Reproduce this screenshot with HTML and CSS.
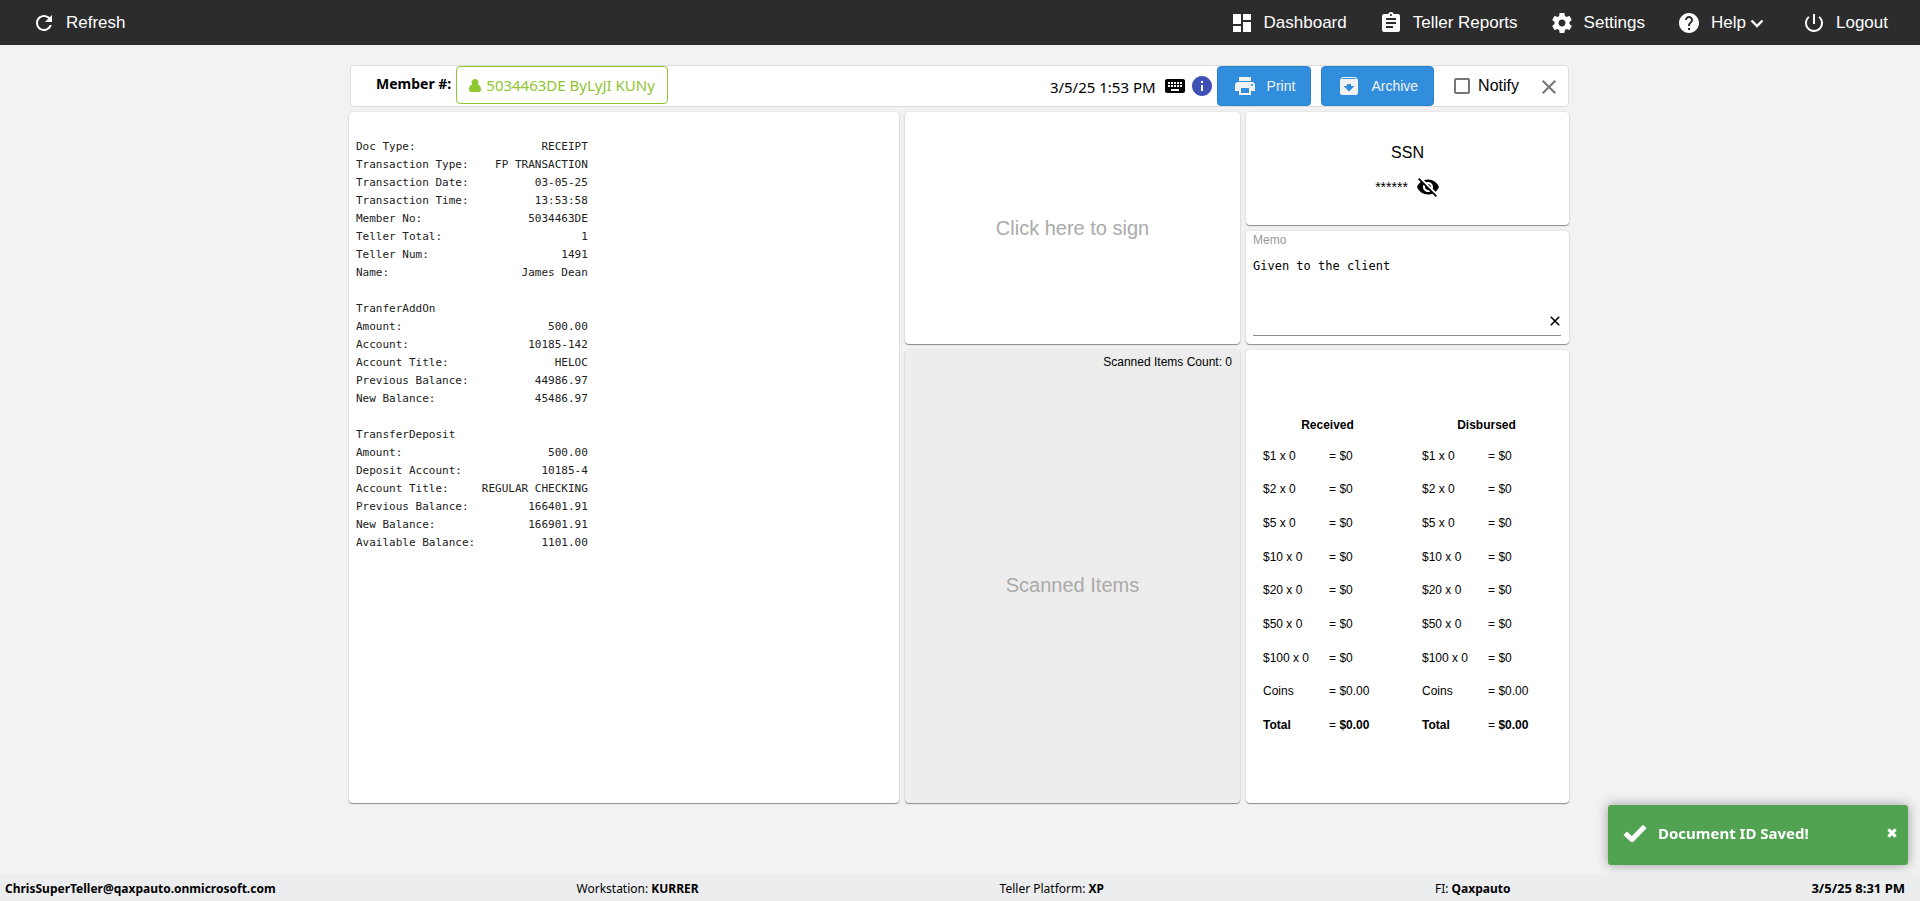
FILE: index.html
```html
<!DOCTYPE html>
<html lang="en">
<head>
<meta charset="utf-8">
<meta name="viewport" content="width=device-width, initial-scale=1">
<title>Teller Receipt</title>
<link rel="stylesheet" href="styles.css">
</head>
<body>
<header class="topbar">
  <a class="nav-item" href="#refresh">
    <svg class="icon" viewBox="0 0 24 24"><path d="M17.65 6.35C16.2 4.9 14.21 4 12 4c-4.42 0-7.99 3.58-7.99 8s3.57 8 7.99 8c3.73 0 6.84-2.55 7.73-6h-2.08c-.82 2.33-3.04 4-5.65 4-3.31 0-6-2.69-6-6s2.69-6 6-6c1.66 0 3.14.69 4.22 1.78L13 11h7V4l-2.35 2.35z"/></svg>
    <span>Refresh</span>
  </a>
  <nav class="nav">
    <a class="nav-item" href="#dashboard">
      <svg class="icon" viewBox="0 0 24 24"><path d="M3 13h8V3H3v10zm0 8h8v-6H3v6zm10 0h8V11h-8v10zm0-18v6h8V3h-8z"/></svg>
      <span>Dashboard</span>
    </a>
    <a class="nav-item" href="#reports">
      <svg class="icon" viewBox="0 0 24 24"><path d="M19 3h-4.18C14.4 1.84 13.3 1 12 1c-1.3 0-2.4.84-2.82 2H5c-1.1 0-2 .9-2 2v14c0 1.1.9 2 2 2h14c1.1 0 2-.9 2-2V5c0-1.1-.9-2-2-2zm-7 0c.55 0 1 .45 1 1s-.45 1-1 1-1-.45-1-1 .45-1 1-1zm2 14H7v-2h7v2zm3-4H7v-2h10v2zm0-4H7V7h10v2z"/></svg>
      <span>Teller Reports</span>
    </a>
    <a class="nav-item" href="#settings">
      <svg class="icon" viewBox="0 0 24 24"><path d="M19.43 12.98c.04-.32.07-.64.07-.98s-.03-.66-.07-.98l2.11-1.65c.19-.15.24-.42.12-.64l-2-3.46c-.12-.22-.39-.3-.61-.22l-2.49 1c-.52-.4-1.08-.73-1.69-.98l-.38-2.65C14.46 2.18 14.25 2 14 2h-4c-.25 0-.46.18-.49.42l-.38 2.65c-.61.25-1.17.59-1.69.98l-2.49-1c-.23-.09-.49 0-.61.22l-2 3.46c-.13.22-.07.49.12.64l2.11 1.65c-.04.32-.07.65-.07.98s.03.66.07.98l-2.11 1.65c-.19.15-.24.42-.12.64l2 3.46c.12.22.39.3.61.22l2.49-1c.52.4 1.08.73 1.69.98l.38 2.65c.03.24.24.42.49.42h4c.25 0 .46-.18.49-.42l.38-2.65c.61-.25 1.17-.59 1.69-.98l2.49 1c.23.09.49 0 .61-.22l2-3.46c.12-.22.07-.49-.12-.64l-2.11-1.65zM12 15.5c-1.93 0-3.5-1.57-3.5-3.5s1.57-3.5 3.5-3.5 3.5 1.57 3.5 3.5-1.57 3.5-3.5 3.5z"/></svg>
      <span>Settings</span>
    </a>
    <a class="nav-item" href="#help">
      <svg class="icon" viewBox="0 0 24 24"><path d="M12 2C6.48 2 2 6.48 2 12s4.48 10 10 10 10-4.48 10-10S17.52 2 12 2zm1 17h-2v-2h2v2zm2.07-7.75l-.9.92C13.45 12.9 13 13.5 13 15h-2v-.5c0-1.1.45-2.1 1.17-2.83l1.24-1.26c.37-.36.59-.86.59-1.41 0-1.1-.9-2-2-2s-2 .9-2 2H8c0-2.21 1.79-4 4-4s4 1.79 4 4c0 .88-.36 1.68-.93 2.25z"/></svg>
      <span class="nav-more">Help
        <svg class="icon-chevron" viewBox="0 0 16 16"><path d="M2.500 5.500 8 11l5.500-5.500"/></svg>
      </span>
    </a>
    <a class="nav-item" href="#logout">
      <svg class="icon" viewBox="0 0 24 24"><path d="M13 3h-2v10h2V3zm4.830 2.170l-1.420 1.420C17.990 7.860 19 9.810 19 12c0 3.870-3.130 7-7 7s-7-3.130-7-7c0-2.190 1.010-4.140 2.580-5.420L6.170 5.170C4.230 6.820 3 9.260 3 12c0 4.970 4.030 9 9 9s9-4.030 9-9c0-2.740-1.230-5.180-3.170-6.830z"/></svg>
      <span>Logout</span>
    </a>
  </nav>
</header>

<main class="workspace">
  <section class="toolbar">
    <span class="member-label">Member #:</span>
    <button class="member-btn" type="button">
      <svg class="icon-user" viewBox="0 0 12 13"><path d="M6 0a3.300 3.400 0 0 1 2.600 5.600C10.800 6 12 7.700 12 10.800 12 12.200 11.200 13 10 13H2c-1.200 0-2-.8-2-2.200C0 7.700 1.200 6 3.400 5.600A3.300 3.400 0 0 1 6 0z"/></svg>
      <span>5034463DE ByLyJI KUNy</span>
    </button>
    <time class="stamp">3/5/25 1:53 PM</time>
    <button class="icon-btn" type="button" aria-label="Keyboard">
      <svg class="icon" viewBox="0 0 24 24"><path d="M20 5H4c-1.100 0-1.990.9-1.990 2L2 17c0 1.100.9 2 2 2h16c1.100 0 2-.9 2-2V7c0-1.100-.9-2-2-2zm-9 3h2v2h-2V8zm0 3h2v2h-2v-2zM8 8h2v2H8V8zm0 3h2v2H8v-2zm-1 2H5v-2h2v2zm0-3H5V8h2v2zm9 7H8v-2h8v2zm0-4h-2v-2h2v2zm0-3h-2V8h2v2zm3 3h-2v-2h2v2zm0-3h-2V8h2v2z"/></svg>
    </button>
    <button class="icon-btn icon-info" type="button" aria-label="Information">
      <svg class="icon" viewBox="0 0 24 24"><path d="M12 2C6.480 2 2 6.480 2 12s4.480 10 10 10 10-4.480 10-10S17.520 2 12 2zm1 15h-2v-6h2v6zm0-8h-2V7h2v2z"/></svg>
    </button>
    <button class="action-btn" type="button">
      <svg class="icon" viewBox="0 0 24 24"><path d="M19 8H5c-1.660 0-3 1.340-3 3v6h4v4h12v-4h4v-6c0-1.660-1.340-3-3-3zm-3 11H8v-5h8v5zm3-7c-.55 0-1-.45-1-1s.45-1 1-1 1 .45 1 1-.45 1-1 1zm-1-9H6v4h12V3z"/></svg>
      <span>Print</span>
    </button>
    <button class="action-btn" type="button">
      <svg class="icon" viewBox="0 0 24 24"><path d="M20.540 5.230l-1.390-1.680C18.880 3.210 18.470 3 18 3H6c-.47 0-.88.21-1.160.55L3.460 5.230C3.170 5.570 3 6.020 3 6.500V19c0 1.100.9 2 2 2h14c1.100 0 2-.9 2-2V6.500c0-.48-.17-.93-.46-1.270zM12 17.500L6.500 12H10v-2h4v2h3.500L12 17.500zM5.120 5l.81-1h12l.94 1H5.120z"/></svg>
      <span>Archive</span>
    </button>
    <label class="notify"><input class="notify-box" type="checkbox">Notify</label>
    <button class="icon-btn icon-close" type="button" aria-label="Close">
      <svg viewBox="0 0 14 14"><path d="M.7.7l12.600 12.600M13.300.7.7 13.300"/></svg>
    </button>
  </section>

  <div class="board">
    <section class="card receipt">
<pre class="receipt-text">Doc Type:                   RECEIPT
Transaction Type:    FP TRANSACTION
Transaction Date:          03-05-25
Transaction Time:          13:53:58
Member No:                5034463DE
Teller Total:                     1
Teller Num:                    1491
Name:                    James Dean

TranferAddOn
Amount:                      500.00
Account:                  10185-142
Account Title:                HELOC
Previous Balance:          44986.97
New Balance:               45486.97

TransferDeposit
Amount:                      500.00
Deposit Account:            10185-4
Account Title:     REGULAR CHECKING
Previous Balance:         166401.91
New Balance:              166901.91
Available Balance:          1101.00</pre>
    </section>

    <button class="card sign" type="button">Click here to sign</button>

    <section class="card scanned">
      <p class="scanned-count">Scanned Items Count: 0</p>
      <p class="scanned-empty">Scanned Items</p>
    </section>

    <section class="card ssn">
      <h2 class="ssn-title">SSN</h2>
      <div class="ssn-value">
        <span>******</span>
        <button class="icon-btn" type="button" aria-label="Show SSN">
          <svg class="icon" viewBox="0 0 24 24"><path d="M12 7c2.760 0 5 2.240 5 5 0 .65-.13 1.260-.36 1.830l2.920 2.920c1.510-1.260 2.700-2.890 3.430-4.750-1.730-4.390-6-7.500-11-7.500-1.400 0-2.740.25-3.980.7l2.160 2.160C10.740 7.130 11.350 7 12 7zM2 4.270l2.280 2.280.46.46C3.080 8.300 1.780 10.020 1 12c1.730 4.390 6 7.500 11 7.500 1.550 0 3.030-.3 4.380-.84l.42.42L19.730 22 21 20.730 3.270 3 2 4.270zM7.530 9.800l1.550 1.550c-.05.21-.08.43-.08.65 0 1.660 1.340 3 3 3 .22 0 .44-.03.65-.08l1.550 1.550c-.67.33-1.410.53-2.200.53-2.760 0-5-2.240-5-5 0-.79.2-1.530.53-2.200zm4.310-.78l3.150 3.150.02-.16c0-1.660-1.340-3-3-3l-.17.01z"/></svg>
        </button>
      </div>
    </section>

    <section class="card memo">
      <label class="memo-label" for="memo">Memo</label>
      <div class="memo-field">
        <textarea class="memo-input" id="memo">Given to the client</textarea>
        <button class="icon-btn memo-clear" type="button" aria-label="Clear memo">
          <svg viewBox="0 0 10 10"><path d="M.8.8l8.400 8.400M9.200.8.8 9.200"/></svg>
        </button>
      </div>
    </section>

    <section class="card cash">
      <table class="cash-table">
        <caption>Received</caption>
        <tbody>
          <tr><td>$1 x 0</td><td>= $0</td></tr>
          <tr><td>$2 x 0</td><td>= $0</td></tr>
          <tr><td>$5 x 0</td><td>= $0</td></tr>
          <tr><td>$10 x 0</td><td>= $0</td></tr>
          <tr><td>$20 x 0</td><td>= $0</td></tr>
          <tr><td>$50 x 0</td><td>= $0</td></tr>
          <tr><td>$100 x 0</td><td>= $0</td></tr>
          <tr><td>Coins</td><td>= $0.00</td></tr>
          <tr><td><b>Total</b></td><td>= <b>$0.00</b></td></tr>
        </tbody>
      </table>
      <table class="cash-table">
        <caption>Disbursed</caption>
        <tbody>
          <tr><td>$1 x 0</td><td>= $0</td></tr>
          <tr><td>$2 x 0</td><td>= $0</td></tr>
          <tr><td>$5 x 0</td><td>= $0</td></tr>
          <tr><td>$10 x 0</td><td>= $0</td></tr>
          <tr><td>$20 x 0</td><td>= $0</td></tr>
          <tr><td>$50 x 0</td><td>= $0</td></tr>
          <tr><td>$100 x 0</td><td>= $0</td></tr>
          <tr><td>Coins</td><td>= $0.00</td></tr>
          <tr><td><b>Total</b></td><td>= <b>$0.00</b></td></tr>
        </tbody>
      </table>
    </section>
  </div>
</main>

<footer class="statusbar">
  <b>ChrisSuperTeller@qaxpauto.onmicrosoft.com</b>
  <span>Workstation: <b>KURRER</b></span>
  <span class="status-platform">Teller Platform: <b>XP</b></span>
  <span>FI: <b>Qaxpauto</b></span>
  <b class="status-time">3/5/25 8:31 PM</b>
</footer>

<div class="toast" role="status">
  <svg class="toast-check" viewBox="0 0 24 18"><path d="M2.200 9.200 9 15.600 21.800 2.600"/></svg>
  <span class="toast-text">Document ID Saved!</span>
  <button class="icon-btn toast-close" type="button" aria-label="Dismiss">
    <svg viewBox="0 0 10 10"><path d="M1.400 1.400l7.200 7.200M8.600 1.400 1.400 8.600"/></svg>
  </button>
</div>
</body>
</html>
```

FILE: styles.css
```css
:root {
  --sans: "Liberation Sans", Arial, sans-serif;
  --humanist: "Noto Sans", "Open Sans", sans-serif;
  --mono: "DejaVu Sans Mono", monospace;
  --green: #8fc631;
  --blue: #318edd;
}

* { box-sizing: border-box; }

body {
  margin: 0;
  min-height: 100vh;
  display: flex;
  flex-direction: column;
  background: #f2f2f2;
  color: #000;
  font-family: var(--sans);
  font-size: 12px;
}

button {
  font: inherit;
  color: inherit;
  cursor: pointer;
}

p, h2, pre { margin: 0; }

svg { display: block; flex: none; fill: currentColor; }

.icon { width: 24px; height: 24px; }

/* Top bar */
.topbar {
  display: flex;
  align-items: center;
  justify-content: space-between;
  height: 45px;
  padding: 0 32px;
  background: #2c2c2c;
  color: #fff;
  font-size: 17px;
}

.nav { display: flex; gap: 32px; }

.nav-item {
  display: flex;
  align-items: center;
  gap: 10px;
  color: inherit;
  text-decoration: none;
}

.nav-more {
  display: flex;
  align-items: center;
  gap: 3px;
  padding-right: 5px;
}

.icon-chevron {
  width: 16px;
  height: 16px;
  fill: none;
  stroke: currentColor;
  stroke-width: 2.4;
}

/* Workspace */
.workspace {
  flex: 1;
  display: flex;
  flex-direction: column;
  gap: 5px;
  width: 100%;
  max-width: 1222px;
  margin: 0 auto;
  padding: 20px 2px 72px 0;
}

.toolbar {
  display: flex;
  align-items: center;
  min-height: 42px;
  margin-left: 1px;
  padding: 0 12px 0 25px;
  background: #fff;
  border: 1px solid #ddd;
  border-radius: 4px;
  font-family: var(--humanist);
  font-size: 15px;
}

.member-label {
  margin-right: 5px;
  padding-bottom: 5px;
  font-size: 14px;
  font-weight: 700;
}

.member-btn {
  display: flex;
  align-items: center;
  gap: 5px;
  height: 38px;
  margin-bottom: 2px;
  padding: 0 12px;
  background: #fff;
  border: 1px solid var(--green);
  border-radius: 4px;
  color: var(--green);
}

.icon-user { width: 12px; height: 13px; }

.stamp {
  margin-left: auto;
  margin-right: 7px;
  padding-top: 2px;
}

.icon-btn {
  padding: 0;
  background: none;
  border: 0;
}

.icon-info { margin: 0 3px; color: #3f51b5; }

.action-btn {
  display: flex;
  align-items: center;
  gap: 10px;
  height: 40px;
  margin-right: 10px;
  padding: 0 15px;
  background: var(--blue);
  border: 1px solid #2b82cc;
  border-radius: 4px;
  color: #f2f2f2;
  font-family: var(--sans);
  font-size: 14px;
}

.notify {
  display: flex;
  align-items: center;
  gap: 8px;
  margin: 0 23px 0 10px;
  font-family: var(--sans);
  font-size: 16px;
}

.notify-box {
  appearance: none;
  width: 16px;
  height: 16px;
  margin: 0;
  border: 2px solid #757575;
  border-radius: 2px;
}

.icon-close { padding-top: 2px; }

.icon-close svg {
  width: 14px;
  height: 14px;
  stroke: #757575;
  stroke-width: 2;
}

/* Cards */
.board {
  flex: 1;
  display: grid;
  grid-template-columns: minmax(0, 550fr) minmax(0, 335fr) minmax(0, 323fr);
  grid-template-rows: 113fr 113fr 453fr;
  grid-template-areas:
    "receipt sign ssn"
    "receipt sign memo"
    "receipt scanned cash";
  gap: 6px;
}

.card {
  background: #fff;
  border: 0;
  border-radius: 4px;
  box-shadow: 0 1px 1px rgba(0, 0, 0, .4), 0 0 3px rgba(0, 0, 0, .1);
}

.receipt { grid-area: receipt; padding: 26px 7px; }

.receipt-text {
  color: #212121;
  font-family: var(--mono);
  font-size: 11px;
  line-height: 18px;
}

.sign { grid-area: sign; color: #aaa; font-size: 20px; }

.scanned {
  grid-area: scanned;
  display: flex;
  flex-direction: column;
  padding: 4px 8px 2px;
  background: #ededed;
}

.scanned-count { line-height: 16px; text-align: right; }

.scanned-empty {
  margin: auto;
  color: #aaa;
  font-size: 20px;
}

.ssn {
  grid-area: ssn;
  display: flex;
  flex-direction: column;
  align-items: center;
  justify-content: center;
  gap: 13px;
  padding-top: 5px;
}

.ssn-title { font-size: 16px; font-weight: 400; }

.ssn-value {
  display: flex;
  align-items: center;
  gap: 8px;
  font-size: 14px;
}

.memo {
  grid-area: memo;
  display: flex;
  flex-direction: column;
  gap: 9px;
  padding: 2px 8px 8px 7px;
}

.memo-label { color: #999; }

.memo-field {
  flex: 1;
  display: flex;
  align-items: flex-end;
  border-bottom: 1px solid #8c8c8c;
}

.memo-input {
  flex: 1;
  align-self: stretch;
  min-width: 0;
  padding: 0;
  background: none;
  border: 0;
  resize: none;
  outline: 0;
  color: #000;
  font-family: var(--mono);
  font-size: 12px;
  line-height: 20px;
}

.memo-clear { padding: 0 1px 9px; }

.memo-clear svg {
  width: 10px;
  height: 10px;
  stroke: #000;
  stroke-width: 1.6;
}

.cash {
  grid-area: cash;
  display: flex;
  align-items: center;
  padding: 0 3px 0 2px;
}

.cash-table {
  flex: 1;
  height: 303px;
  border-collapse: collapse;
  table-layout: fixed;
}

.cash-table caption { height: 28px; line-height: 28px; font-weight: 700; }

.cash-table td { padding: 0; }

.cash-table td:first-child { width: 51%; padding-left: 15px; }

/* Status bar */
.statusbar {
  display: flex;
  align-items: center;
  justify-content: space-between;
  height: 26px;
  padding: 0 15px 0 5px;
  background: #ecedef;
  font-family: var(--humanist);
  font-size: 12px;
}

.status-platform { margin-right: 30px; }

.status-time { font-size: 13px; }

/* Toast */
.toast {
  position: fixed;
  right: 12px;
  bottom: 36px;
  display: flex;
  align-items: center;
  width: 300px;
  height: 60px;
  padding: 0 11px 5px 15px;
  background: #51a351;
  border-radius: 3px;
  box-shadow: 0 0 12px #999;
  color: #fff;
  font-family: var(--humanist);
  font-size: 15px;
  font-weight: 700;
}

.toast-check {
  width: 24px;
  height: 18px;
  margin-right: 11px;
  fill: none;
  stroke: currentColor;
  stroke-width: 5;
}

.toast-close { margin-left: auto; }

.toast-close svg {
  width: 10px;
  height: 10px;
  stroke: currentColor;
  stroke-width: 3;
}
```
